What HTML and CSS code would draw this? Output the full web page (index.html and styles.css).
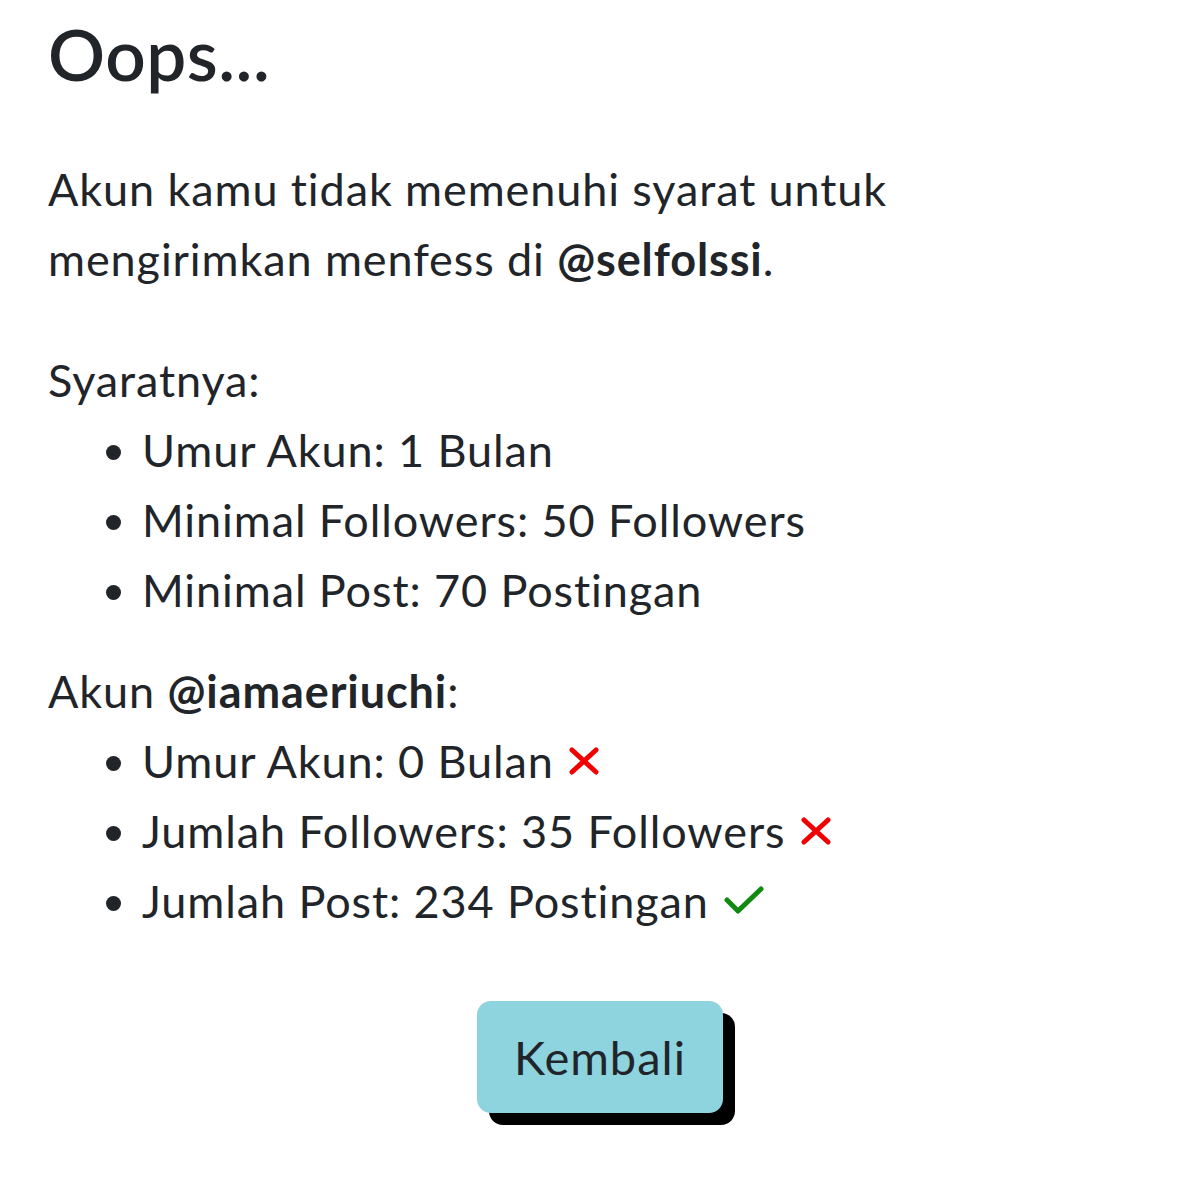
FILE: index.html
```html
<!DOCTYPE html>
<html lang="id">
<head>
<meta charset="utf-8">
<title>Oops...</title>
<link rel="stylesheet" href="styles.css">
</head>
<body>
<main class="page">
  <h1 class="title">Oops...</h1>
  <p class="lead">Akun kamu tidak memenuhi syarat untuk<br>mengirimkan menfess di <b>@selfolssi</b>.</p>
  <p class="label">Syaratnya:</p>
  <ul class="list">
    <li>Umur Akun: 1 Bulan</li>
    <li>Minimal Followers: 50 Followers</li>
    <li>Minimal Post: 70 Postingan</li>
  </ul>
  <p class="label">Akun <b>@iamaeriuchi</b>:</p>
  <ul class="list">
    <li>Umur Akun: 0 Bulan <svg class="icon icon-x" viewBox="0 0 32 28"><path d="M4 3L28 25M28 3L4 25" stroke="#f00000" stroke-width="5" stroke-linecap="round" fill="none"/></svg></li>
    <li>Jumlah Followers: 35 Followers <svg class="icon icon-x" viewBox="0 0 32 28"><path d="M4 3L28 25M28 3L4 25" stroke="#f00000" stroke-width="5" stroke-linecap="round" fill="none"/></svg></li>
    <li>Jumlah Post: 234 Postingan <svg class="icon icon-check" viewBox="0 0 42 30"><path d="M4 15L15 26L38 4" stroke="#128a12" stroke-width="5" stroke-linecap="round" stroke-linejoin="round" fill="none"/></svg></li>
  </ul>
  <div class="actions">
    <button class="btn">Kembali</button>
  </div>
</main>
</body>
</html>
```
FILE: styles.css
```css
html, body {
  margin: 0;
  padding: 0;
  background: #ffffff;
}
body {
  font-family: "Lato", "Noto Sans", sans-serif;
  color: #212529;
}
.page {
  padding: 12px 48px 60px 48px;
  width: 1200px;
  box-sizing: border-box;
}
.title {
  font-size: 71px;
  font-weight: 600;
  line-height: 84px;
  margin: 0 0 58px 0;
  letter-spacing: 0.5px;
}
.lead,
.label,
.list {
  font-size: 45px;
  line-height: 70px;
  letter-spacing: 0.9px;
}
.lead {
  margin: 0 0 51px 0;
}
.label {
  margin: 0;
}
.list {
  margin: 0 0 31px 0;
  padding-left: 94px;
}
b {
  font-weight: 700;
}
.icon {
  vertical-align: 3px;
  margin-left: 2px;
}
.icon-x {
  width: 32px;
  height: 28px;
}
.icon-check {
  width: 42px;
  height: 30px;
}
.actions {
  display: flex;
  justify-content: center;
  margin-top: 65px;
  padding-bottom: 20px;
}
.btn {
  font-family: inherit;
  font-size: 47px;
  letter-spacing: 1px;
  color: #212529;
  background: #8dd4de;
  border: none;
  border-radius: 14px;
  width: 246px;
  height: 112px;
  padding: 0;
  box-shadow: 12px 12px 0 0 #000000;
}
```
